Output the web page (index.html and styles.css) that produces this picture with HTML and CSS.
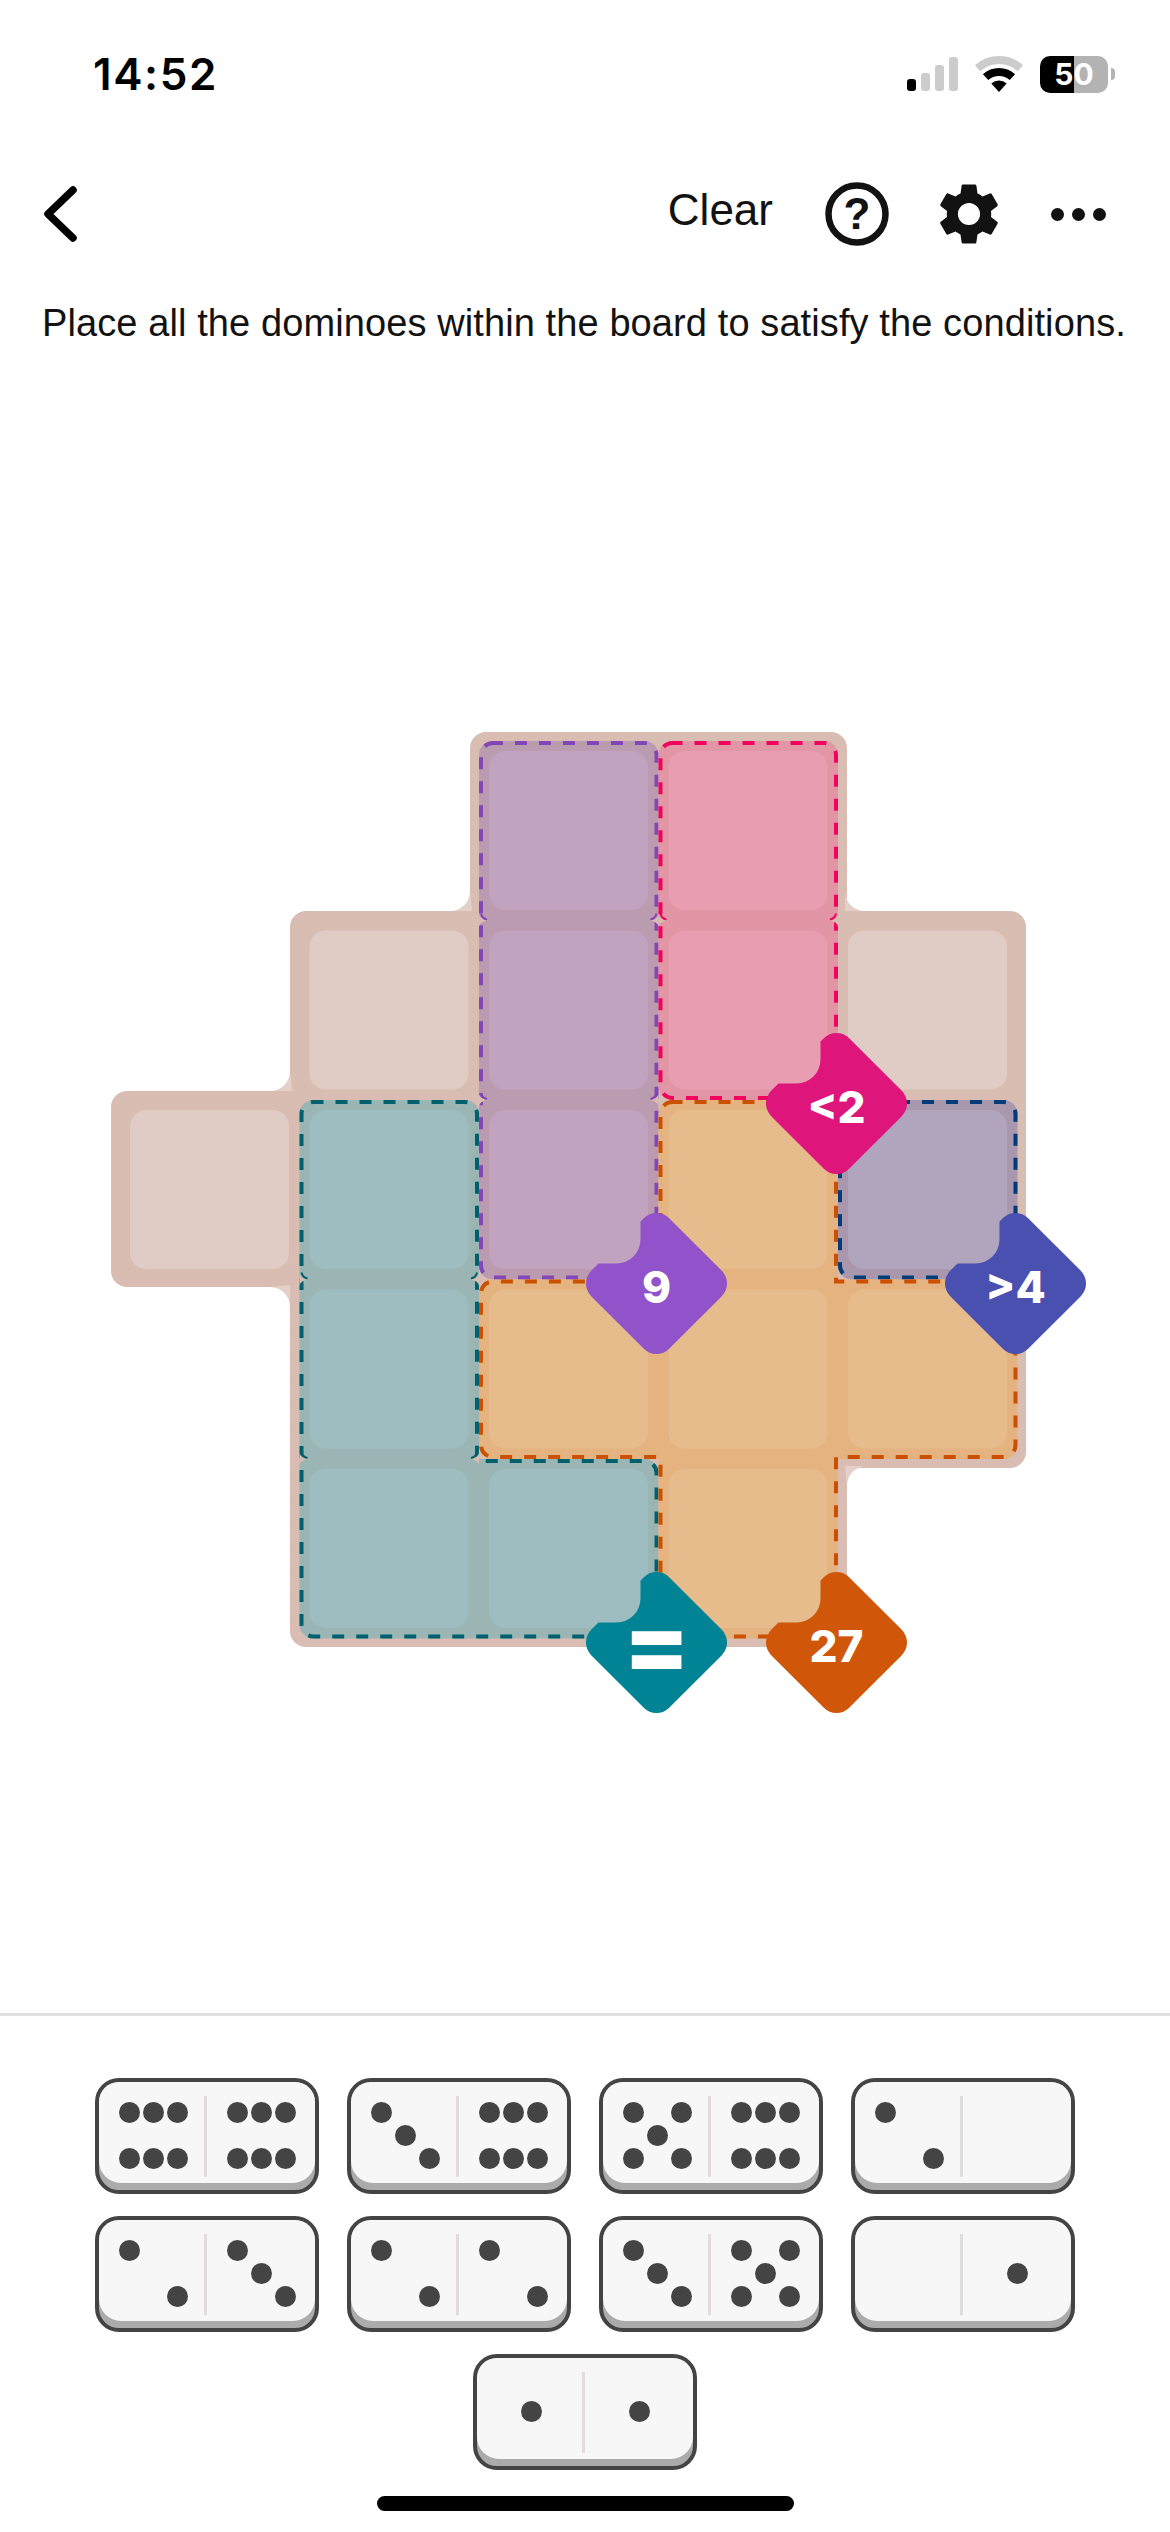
FILE: index.html
```html
<!DOCTYPE html>
<html lang="en">
<head>
  <meta charset="utf-8">
  <title>Pips</title>
  <link rel="stylesheet" href="styles.css">
</head>
<body>
  <div class="status">
    <span class="time">14:52</span>
    <div class="status-icons">
      <svg class="signal" viewBox="0 0 51 34" width="51" height="34">
        <rect class="on" x="0" y="22" width="9" height="12" rx="3"/>
        <rect x="14" y="16" width="9" height="18" rx="3"/>
        <rect x="28" y="8" width="9" height="26" rx="3"/>
        <rect x="42" y="0" width="9" height="34" rx="3"/>
      </svg>
      <svg class="wifi" viewBox="0 0 52 38" width="52" height="38">
        <path class="off" d="M4.6 13.2 A32 32 0 0 1 47.4 13.2"/>
        <path class="lit" d="M12.6 22.1 A20 20 0 0 1 39.4 22.1"/>
        <path class="dot" d="M26 37 L18.3 28.5 A11.5 11.5 0 0 1 33.7 28.5 Z"/>
      </svg>
      <div class="battery"><span>50</span></div>
      <div class="battery-nub"></div>
    </div>
  </div>

  <div class="nav">
    <svg class="back" viewBox="0 0 40 60" width="40" height="60">
      <path d="M34 6 L9 30 L34 54"/>
    </svg>
    <span class="clear">Clear</span>
    <svg class="help" viewBox="0 0 64 64" width="64" height="64">
      <circle cx="32" cy="32" r="28.5"/>
      <text x="32" y="47">?</text>
    </svg>
    <svg class="gear" viewBox="0 0 24 24" width="74" height="74">
      <path d="M19.14 12.94c.04-.3.06-.61.06-.94 0-.32-.02-.64-.07-.94l2.03-1.58a.49.49 0 0 0 .12-.61l-1.92-3.32a.488.488 0 0 0-.59-.22l-2.39.96c-.5-.38-1.03-.7-1.62-.94l-.36-2.54a.484.484 0 0 0-.48-.41h-3.84c-.24 0-.43.17-.47.41l-.36 2.54c-.59.24-1.13.57-1.62.94l-2.39-.96c-.22-.08-.47 0-.59.22L2.74 8.87c-.12.21-.08.47.12.61l2.03 1.58c-.05.3-.09.63-.09.94s.02.64.07.94l-2.03 1.58a.49.49 0 0 0-.12.61l1.92 3.32c.12.22.37.29.59.22l2.39-.96c.5.38 1.03.7 1.62.94l.36 2.54c.05.24.24.41.48.41h3.84c.24 0 .44-.17.47-.41l.36-2.54c.59-.24 1.13-.56 1.62-.94l2.39.96c.22.08.47 0 .59-.22l1.92-3.32c.12-.22.07-.47-.12-.61l-2.01-1.58zM12 15.6c-1.98 0-3.6-1.62-3.6-3.6s1.62-3.6 3.6-3.6 3.6 1.62 3.6 3.6-1.62 3.6-3.6 3.6z"/>
    </svg>
    <div class="more"><i></i><i></i><i></i></div>
  </div>

  <p class="hint">Place all the dominoes within the board to satisfy the conditions.</p>

  <!-- viewBox uses page coordinates so cells read directly -->
  <svg class="board" viewBox="0 700 1170 1020" width="1170" height="1020">
    <defs>
      <path id="badge" d="M12.7 -65.3 L65.3 -12.7 A18 18 0 0 1 65.3 12.7 L12.7 65.3 A18 18 0 0 1 -12.7 65.3 L-65.3 12.7 A18 18 0 0 1 -65.3 -12.7 L-58 -20 L-40 -20 A24 24 0 0 0 -16 -44 L-16 -62 L-12.7 -65.3 A18 18 0 0 1 12.7 -65.3 Z"/>
      <rect id="r-purple" x="481" y="743" width="175.5" height="534.5" rx="12"/>
      <rect id="r-pink" x="660.5" y="743" width="175.5" height="355" rx="12"/>
      <rect id="r-navy" x="840" y="1102" width="175.5" height="175.5" rx="12"/>
      <path id="r-teal" d="M313.5 1102 H465 a12 12 0 0 1 12 12 V1461 H644.5 a12 12 0 0 1 12 12 V1624.5 a12 12 0 0 1 -12 12 H313.5 a12 12 0 0 1 -12 -12 V1114 a12 12 0 0 1 12 -12 Z"/>
      <path id="r-orange" d="M672.5 1102 H824 a12 12 0 0 1 12 12 V1281.5 H1003.5 a12 12 0 0 1 12 12 V1445 a12 12 0 0 1 -12 12 H836 V1624.5 a12 12 0 0 1 -12 12 H672.5 a12 12 0 0 1 -12 -12 V1457 H493 a12 12 0 0 1 -12 -12 V1293.5 a12 12 0 0 1 12 -12 H660.5 V1114 a12 12 0 0 1 12 -12 Z"/>
      <!-- small gap where two rounded cells of a region meet -->
      <g id="nick">
        <path class="nick-gap" d="M0 -6 Q1 -1 9 0 Q1 1 0 6 Z"/>
        <path class="nick-arc" d="M2 -7 Q3 -2 8 -1"/>
      </g>
    </defs>

    <path class="base" d="M486 732 H831 a16 16 0 0 1 16 16 V911 H1010 a16 16 0 0 1 16 16 V1452 a16 16 0 0 1 -16 16 H847 V1631 a16 16 0 0 1 -16 16 H306 a16 16 0 0 1 -16 -16 V1287 H127 a16 16 0 0 1 -16 -16 V1107 a16 16 0 0 1 16 -16 H290 V927 a16 16 0 0 1 16 -16 H470 V748 a16 16 0 0 1 16 -16 Z"/>
    <path class="fillet" d="M472 911 H450 A20 20 0 0 0 470 891 Z"/>
    <path class="fillet" d="M292 1091 H270 A20 20 0 0 0 290 1071 Z"/>
    <path class="fillet" d="M845 911 V891 A20 20 0 0 0 867 911 Z"/>
    <path class="fillet" d="M845 1466 H867 A20 20 0 0 0 847 1488 Z"/>
    <path class="fillet" d="M290 1285 V1307 A20 20 0 0 0 270 1287 Z"/>

    <rect class="tile" x="309.5" y="930.5"/>
    <rect class="tile" x="848" y="930.5"/>
    <rect class="tile" x="130" y="1110"/>

    <use class="area teal" href="#r-teal"/>
    <rect class="tile teal" x="309.5" y="1110"/>
    <rect class="tile teal" x="309.5" y="1289.5"/>
    <rect class="tile teal" x="309.5" y="1469"/>
    <rect class="tile teal" x="489" y="1469"/>
    <use class="dash teal" href="#r-teal"/>

    <use class="area purple" href="#r-purple"/>
    <rect class="tile purple" x="489" y="751"/>
    <rect class="tile purple" x="489" y="930.5"/>
    <rect class="tile purple" x="489" y="1110"/>
    <use class="dash purple" href="#r-purple"/>

    <use class="area pink" href="#r-pink"/>
    <rect class="tile pink" x="668.5" y="751"/>
    <rect class="tile pink" x="668.5" y="930.5"/>
    <use class="dash pink" href="#r-pink"/>

    <use class="area navy" href="#r-navy"/>
    <rect class="tile navy" x="848" y="1110"/>
    <use class="dash navy" href="#r-navy"/>

    <use class="area orange" href="#r-orange"/>
    <rect class="tile orange" x="668.5" y="1110"/>
    <rect class="tile orange" x="489" y="1289.5"/>
    <rect class="tile orange" x="668.5" y="1289.5"/>
    <rect class="tile orange" x="848" y="1289.5"/>
    <rect class="tile orange" x="668.5" y="1469"/>
    <use class="dash orange" href="#r-orange"/>

    <use class="nick purple" href="#nick" transform="translate(479 920.5)"/>
    <use class="nick purple" href="#nick" transform="translate(479 1100)"/>
    <use class="nick purple" href="#nick" transform="translate(658.5 920.5) scale(-1 1)"/>
    <use class="nick purple" href="#nick" transform="translate(658.5 1100) scale(-1 1)"/>
    <use class="nick pink" href="#nick" transform="translate(658.5 920.5)"/>
    <use class="nick pink" href="#nick" transform="translate(838 920.5) scale(-1 1)"/>
    <use class="nick teal" href="#nick" transform="translate(299.5 1279.5)"/>
    <use class="nick teal" href="#nick" transform="translate(299.5 1459)"/>
    <use class="nick teal" href="#nick" transform="translate(479 1279.5) scale(-1 1)"/>
    <use class="nick teal" href="#nick" transform="translate(479 1459) scale(-1 1)"/>

    <g class="badge" transform="translate(836.5 1103.5)"><use class="b-pink" href="#badge"/><text y="19">&lt;2</text></g>
    <g class="badge" transform="translate(656.5 1283.5)"><use class="b-purple" href="#badge"/><text y="19">9</text></g>
    <g class="badge" transform="translate(1015.5 1283.5)"><use class="b-navy" href="#badge"/><text y="19">&gt;4</text></g>
    <g class="badge" transform="translate(656.5 1642.5)"><use class="b-teal" href="#badge"/><text class="equals" y="36">=</text></g>
    <g class="badge" transform="translate(836.5 1642.5)"><use class="b-orange" href="#badge"/><text y="19">27</text></g>
  </svg>

  <div class="tray">
    <div class="tray-row">
      <div class="domino"><div class="face">
        <div class="half"><i class="pip r1 c1"></i><i class="pip r1 c2"></i><i class="pip r1 c3"></i><i class="pip r3 c1"></i><i class="pip r3 c2"></i><i class="pip r3 c3"></i></div>
        <div class="split"></div>
        <div class="half"><i class="pip r1 c1"></i><i class="pip r1 c2"></i><i class="pip r1 c3"></i><i class="pip r3 c1"></i><i class="pip r3 c2"></i><i class="pip r3 c3"></i></div>
      </div></div>
      <div class="domino"><div class="face">
        <div class="half"><i class="pip r1 c1"></i><i class="pip r2 c2"></i><i class="pip r3 c3"></i></div>
        <div class="split"></div>
        <div class="half"><i class="pip r1 c1"></i><i class="pip r1 c2"></i><i class="pip r1 c3"></i><i class="pip r3 c1"></i><i class="pip r3 c2"></i><i class="pip r3 c3"></i></div>
      </div></div>
      <div class="domino"><div class="face">
        <div class="half"><i class="pip r1 c1"></i><i class="pip r1 c3"></i><i class="pip r2 c2"></i><i class="pip r3 c1"></i><i class="pip r3 c3"></i></div>
        <div class="split"></div>
        <div class="half"><i class="pip r1 c1"></i><i class="pip r1 c2"></i><i class="pip r1 c3"></i><i class="pip r3 c1"></i><i class="pip r3 c2"></i><i class="pip r3 c3"></i></div>
      </div></div>
      <div class="domino"><div class="face">
        <div class="half"><i class="pip r1 c1"></i><i class="pip r3 c3"></i></div>
        <div class="split"></div>
        <div class="half"></div>
      </div></div>
    </div>
    <div class="tray-row">
      <div class="domino"><div class="face">
        <div class="half"><i class="pip r1 c1"></i><i class="pip r3 c3"></i></div>
        <div class="split"></div>
        <div class="half"><i class="pip r1 c1"></i><i class="pip r2 c2"></i><i class="pip r3 c3"></i></div>
      </div></div>
      <div class="domino"><div class="face">
        <div class="half"><i class="pip r1 c1"></i><i class="pip r3 c3"></i></div>
        <div class="split"></div>
        <div class="half"><i class="pip r1 c1"></i><i class="pip r3 c3"></i></div>
      </div></div>
      <div class="domino"><div class="face">
        <div class="half"><i class="pip r1 c1"></i><i class="pip r2 c2"></i><i class="pip r3 c3"></i></div>
        <div class="split"></div>
        <div class="half"><i class="pip r1 c1"></i><i class="pip r1 c3"></i><i class="pip r2 c2"></i><i class="pip r3 c1"></i><i class="pip r3 c3"></i></div>
      </div></div>
      <div class="domino"><div class="face">
        <div class="half"></div>
        <div class="split"></div>
        <div class="half"><i class="pip r2 c2"></i></div>
      </div></div>
    </div>
    <div class="tray-row">
      <div class="domino"><div class="face">
        <div class="half"><i class="pip r2 c2"></i></div>
        <div class="split"></div>
        <div class="half"><i class="pip r2 c2"></i></div>
      </div></div>
    </div>
    <div class="home-bar"></div>
  </div>
</body>
</html>
```

FILE: styles.css
```css
html { background: #fff; }

body {
  margin: 0;
  width: 1170px;
  height: 2532px;
  overflow: hidden;
  font-family: "Liberation Sans", Arial, sans-serif;
  color: #121212;
}

/* status bar */
.status {
  height: 148px;
  display: flex;
  align-items: center;
  justify-content: space-between;
  padding: 0 55px 0 93px;
  box-sizing: border-box;
}
.time {
  font-family: Inter, sans-serif;
  font-size: 44px;
  font-weight: 600;
  letter-spacing: 1.6px;
  color: #000;
}
.status-icons { display: flex; align-items: center; }
.signal rect { fill: #ccc; }
.signal rect.on { fill: #000; }
.wifi { margin-left: 15px; }
.wifi path { fill: none; stroke-width: 8; }
.wifi .off { stroke: #ccc; }
.wifi .lit { stroke: #000; }
.wifi .dot { fill: #000; stroke: none; }
.battery {
  margin-left: 15px;
  width: 68px;
  height: 37px;
  border-radius: 10px;
  display: flex;
  align-items: center;
  justify-content: center;
  background: linear-gradient(90deg, #000 50%, #b3b3b3 50%);
  color: #fff;
  font-family: Inter, sans-serif;
  font-size: 30px;
  font-weight: 700;
}
.battery-nub {
  margin-left: 3px;
  width: 4px;
  height: 12px;
  border-radius: 0 6px 6px 0;
  background: #b3b3b3;
}

/* nav */
.nav {
  height: 132px;
  display: flex;
  align-items: center;
  padding: 0 64px 0 39px;
  box-sizing: border-box;
}
.back path {
  fill: none;
  stroke: #000;
  stroke-width: 7.5;
  stroke-linecap: round;
  stroke-linejoin: round;
}
.clear {
  margin-left: auto;
  font-size: 44px;
  margin-right: 52px;
  position: relative;
  top: -4px;
}
.help circle { fill: none; stroke: #121212; stroke-width: 6.5; }
.help text {
  font-family: "Liberation Sans", sans-serif;
  font-size: 44px;
  font-weight: 700;
  text-anchor: middle;
  fill: #121212;
}
.gear { margin-left: 43px; }
.gear path { fill: #121212; }
.more { margin-left: 45px; display: flex; gap: 8px; }
.more i { width: 13px; height: 13px; border-radius: 50%; background: #121212; }

.hint {
  margin: 20px 0 0 42px;
  height: 46px;
  font-size: 38px;
  line-height: 46px;
  letter-spacing: 0.1px;
  white-space: nowrap;
}

/* board */
.board { display: block; margin-top: 354px; }
.base { fill: #d9bdb2; }
.fillet { fill: #e2d0c9; }
.tile { width: 159px; height: 159px; rx: 16px; fill: #e0ccc5; }

.area { stroke-width: 4; stroke-linejoin: round; }
.dash { fill: none; stroke-width: 4; stroke-dasharray: 12 12; stroke-dashoffset: 2; }
.nick-gap { fill: #d9bdb2; }
.nick-arc { fill: none; stroke: currentColor; stroke-width: 2; }

.area.teal { fill: #9bb4b4; stroke: #9bb4b4; }
.tile.teal { fill: #9ebdc0; }
.dash.teal { stroke: #00616e; }
.nick.teal { color: #00616e; }

.area.purple { fill: #ba9bb0; stroke: #ba9bb0; }
.tile.purple { fill: #c1a2bf; }
.dash.purple { stroke: #8346b6; }
.nick.purple { color: #8346b6; }

.area.pink { fill: #e296a5; stroke: #e296a5; }
.tile.pink { fill: #e89eb0; }
.dash.pink { stroke: #f0045c; }
.nick.pink { color: #f0045c; }

.area.navy { fill: #a997ae; stroke: #a997ae; }
.tile.navy { fill: #b1a4bd; }
.dash.navy { stroke: #003b7a; }

.area.orange { fill: #e4b37f; stroke: #e4b37f; }
.tile.orange { fill: #e7bc8d; }
.dash.orange { stroke: #cb5000; }

.b-pink { fill: #de167c; }
.b-purple { fill: #9252c9; }
.b-navy { fill: #4950b0; }
.b-teal { fill: #008394; }
.b-orange { fill: #d0570a; }

.badge text {
  font-family: Inter, sans-serif;
  font-size: 44px;
  font-weight: 800;
  text-anchor: middle;
  fill: #fff;
}
.badge text.equals { font-size: 98px; font-weight: 800; }

/* domino tray */
.tray {
  margin-top: 293px;
  border-top: 3px solid #e0e0e0;
  padding-top: 62px;
  display: flex;
  flex-direction: column;
  align-items: center;
  gap: 22px;
}
.tray-row { display: flex; gap: 28px; }
.domino {
  width: 224px;
  height: 116px;
  box-sizing: border-box;
  border: 4px solid #444;
  border-radius: 24px;
  background: #ababab;
}
.face {
  height: 101px;
  box-sizing: border-box;
  padding: 14px 18px 0;
  display: flex;
  align-items: flex-start;
  background: #f7f7f7;
  border-radius: 20px 20px 22px 22px;
}
.split {
  width: 3px;
  height: 81px;
  margin: 0 18px 0 15px;
  background: #e2dcdc;
}
.half {
  width: 72px;
  margin-top: 5px;
  display: grid;
  grid-template-columns: repeat(3, 24px);
  grid-template-rows: repeat(3, 23px);
  place-items: center;
}
.pip { width: 21px; height: 21px; border-radius: 50%; background: #444; }
.r1 { grid-row: 1; }
.r2 { grid-row: 2; }
.r3 { grid-row: 3; }
.c1 { grid-column: 1; }
.c2 { grid-column: 2; }
.c3 { grid-column: 3; }

.home-bar {
  width: 417px;
  height: 15px;
  margin-top: 4px;
  border-radius: 8px;
  background: #000;
}
```
